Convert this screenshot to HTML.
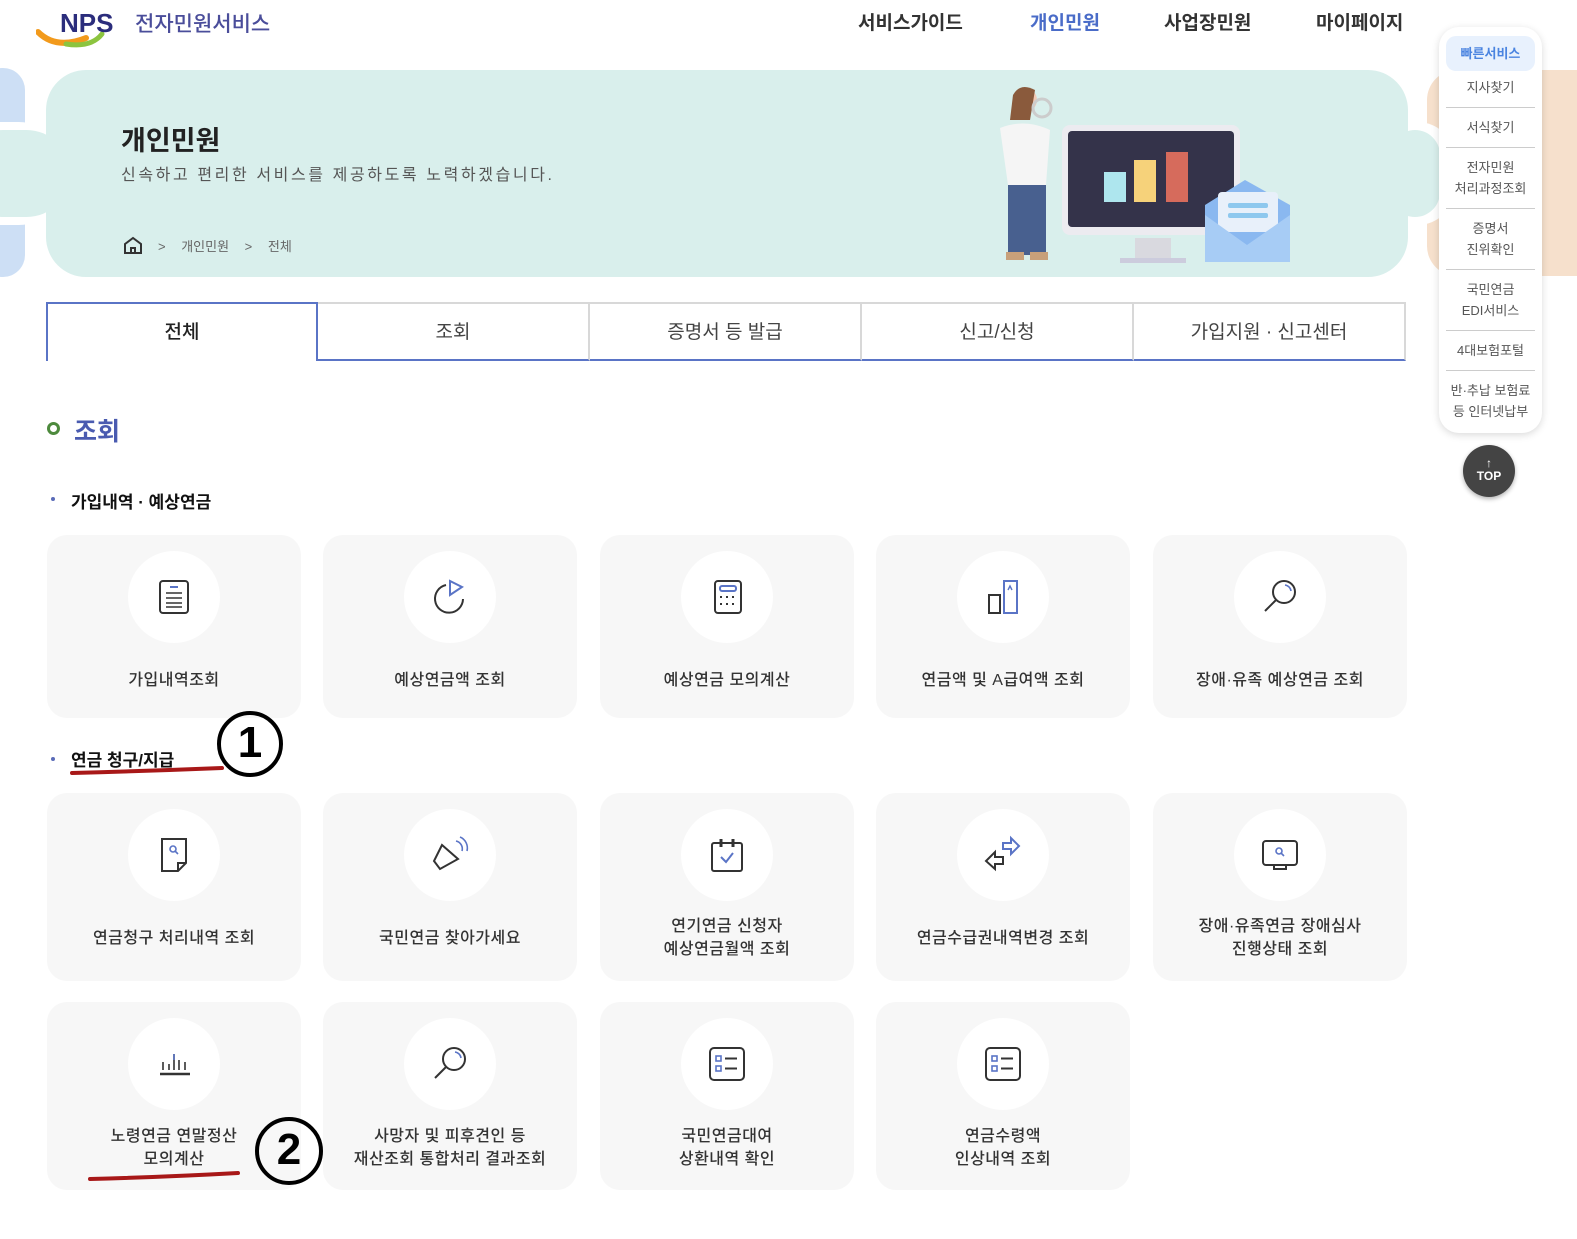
<!DOCTYPE html>
<html><head><meta charset="utf-8">
<style>
*{margin:0;padding:0;box-sizing:border-box}
body{width:1577px;height:1239px;position:relative;background:#fff;overflow:hidden;font-family:"Liberation Sans","Noto Sans CJK KR",sans-serif;color:#222}
.a{position:absolute}
.nav{top:8px;font-size:19px;font-weight:700;color:#333}
.tab{position:absolute;top:302px;height:59px;width:272px;text-align:center;line-height:58px;font-size:19px;color:#444;border-top:2px solid #d8d8d8;border-right:2px solid #d8d8d8;border-bottom:2px solid #5a74c6}
.card{position:absolute;width:254px;background:#f7f7f7;border-radius:20px}
.circ{position:absolute;left:81px;top:16px;width:92px;height:92px;border-radius:50%;background:#fff}
.circ svg{position:absolute;left:26px;top:26px}
.lbl{position:absolute;left:0;width:254px;text-align:center;font-size:16px;font-weight:500;color:#333;line-height:23px;letter-spacing:0.5px}
.qs{font-size:13px;color:#555;text-align:center;line-height:21px}
.qs div{border-bottom:1px solid #ccc;margin:0 7px;padding:9px 0 9px}
</style></head><body>
<!-- logo -->
<svg class="a" style="left:36px;top:8px" width="100" height="42" viewBox="0 0 100 42">
<path d="M2 24 Q20 42 50 30" stroke="#f29a1c" stroke-width="6" fill="none" stroke-linecap="round"/>
<path d="M30 36 Q55 40 66 26" stroke="#8cc43f" stroke-width="5" fill="none" stroke-linecap="round"/>
<text x="24" y="24" font-family="Liberation Sans" font-weight="700" font-size="26" fill="#2b2d7c">NPS</text>
</svg>
<div class="a" style="left:135px;top:8px;font-size:21px;color:#4a4d9a;font-weight:500">전자민원서비스</div>
<div class="a nav" style="left:858px">서비스가이드</div>
<div class="a nav" style="left:1030px;color:#4a6cc8">개인민원</div>
<div class="a nav" style="left:1164px">사업장민원</div>
<div class="a nav" style="left:1316px">마이페이지</div>

<!-- banner -->
<div class="a" style="left:-20px;top:68px;width:45px;height:209px;border-radius:22px;background:#cddff5"></div>
<div class="a" style="left:1427px;top:70px;width:200px;height:206px;border-radius:30px;background:#f6e0cc"></div>
<div class="a" style="left:-50px;top:122px;width:120px;height:103px;border-radius:52px;background:#fff"></div>
<div class="a" style="left:1380px;top:122px;width:75px;height:103px;border-radius:52px;background:#fff"></div>
<div class="a" style="left:-40px;top:130px;width:110px;height:87px;border-radius:44px;background:#d9efec"></div>
<div class="a" style="left:1390px;top:130px;width:50px;height:87px;border-radius:44px;background:#d9efec"></div>
<div class="a" style="left:46px;top:70px;width:1362px;height:207px;border-radius:40px;background:#d9efec"></div>
<div class="a" style="left:121px;top:119px;font-size:27px;font-weight:700;color:#222">개인민원</div>
<div class="a" style="left:121px;top:161px;font-size:16px;color:#555;letter-spacing:2.6px">신속하고 편리한 서비스를 제공하도록 노력하겠습니다.</div>
<svg class="a" style="left:123px;top:236px" width="20" height="18" viewBox="0 0 20 18"><path d="M2 8 L10 2 L18 8 V17 H2 Z M8 17 V12 H12 V17" fill="none" stroke="#333" stroke-width="2"/></svg>
<div class="a" style="left:158px;top:236px;font-size:13px;color:#666;word-spacing:12px">&gt; 개인민원 &gt; 전체</div>
<!-- illustration -->
<svg class="a" style="left:980px;top:80px" width="320" height="190" viewBox="0 0 320 190">
<rect x="82" y="45" width="178" height="110" rx="8" fill="#ecebf0"/>
<rect x="88" y="51" width="166" height="96" rx="4" fill="#34334a"/>
<rect x="124" y="92" width="22" height="30" fill="#aee6ee"/>
<rect x="154" y="80" width="22" height="42" fill="#f6d27a"/>
<rect x="186" y="72" width="22" height="50" fill="#d66b5c"/>
<rect x="155" y="158" width="36" height="20" fill="#d9d9df"/>
<rect x="140" y="178" width="66" height="5" fill="#ccd"/>
<path d="M225 125 L265 100 L310 125 V182 H225 Z" fill="#8ab8f0"/>
<rect x="238" y="112" width="60" height="40" rx="4" fill="#e8f0fa"/>
<rect x="248" y="123" width="40" height="5" rx="2" fill="#8ec8ee"/>
<rect x="248" y="133" width="40" height="5" rx="2" fill="#8ec8ee"/>
<path d="M225 135 L267 165 L310 135 V182 H225 Z" fill="#a7ccf5"/>
<circle cx="45" cy="20" r="12" fill="#f2c9b4"/><path d="M33 15 Q40 2 55 10 L50 40 L30 40 Z" fill="#8a5a3c"/>
<path d="M20 48 Q45 38 70 50 L66 105 L28 105 Z" fill="#f5f5f5"/>
<rect x="28" y="105" width="38" height="70" fill="#48608f"/>
<circle cx="62" cy="28" r="9" fill="none" stroke="#ccc" stroke-width="3"/>
<rect x="26" y="172" width="18" height="8" fill="#c8a07a"/><rect x="50" y="172" width="18" height="8" fill="#c8a07a"/>
</svg>

<!-- tabs -->
<div class="tab" style="left:46px;border:2px solid #5a74c6;border-bottom:none;color:#222;font-weight:500">전체</div>
<div class="tab" style="left:318px;border-left:none">조회</div>
<div class="tab" style="left:590px">증명서 등 발급</div>
<div class="tab" style="left:862px">신고/신청</div>
<div class="tab" style="left:1134px">가입지원 · 신고센터</div>

<div class="a" style="left:47px;top:422px;width:13px;height:13px;border:3px solid #4d8a3d;border-radius:50%"></div>
<div class="a" style="left:74px;top:412px;font-size:25px;font-weight:700;color:#4a5bb0">조회</div>
<div class="a" style="left:51px;top:497px;width:4px;height:4px;border-radius:50%;background:#5a6bb8"></div>
<div class="a" style="left:71px;top:488px;font-size:17px;font-weight:700;color:#111">가입내역 · 예상연금</div>

<!-- row1 -->
<div class="card" style="left:47px;top:535px;height:183px"><div class="circ"><svg width="40" height="40" viewBox="0 0 40 40"><rect x="6" y="4" width="28" height="32" rx="3" fill="none" stroke="#333" stroke-width="2"/><path d="M16 10h8" stroke="#5a74c6" stroke-width="2"/><path d="M12 16h16M12 21h16M12 26h16M12 30h16" stroke="#333" stroke-width="1.6"/></svg></div><div class="lbl" style="top:134px">가입내역조회</div></div>
<div class="card" style="left:323px;top:535px;height:183px"><div class="circ"><svg width="40" height="40" viewBox="0 0 40 40"><path d="M16 8 A14 14 0 1 0 33 22" fill="none" stroke="#333" stroke-width="2"/><path d="M20 4 V18 L32 10 Z" fill="none" stroke="#5a74c6" stroke-width="2"/></svg></div><div class="lbl" style="top:134px">예상연금액 조회</div></div>
<div class="card" style="left:600px;top:535px;height:183px"><div class="circ"><svg width="40" height="40" viewBox="0 0 40 40"><rect x="8" y="4" width="26" height="32" rx="3" fill="none" stroke="#333" stroke-width="2"/><rect x="13" y="9" width="16" height="5" rx="2" fill="none" stroke="#5a74c6" stroke-width="2"/><path d="M13 20h2M19 20h2M25 20h2M13 27h2M19 27h2M25 27h2" stroke="#333" stroke-width="2"/></svg></div><div class="lbl" style="top:134px">예상연금 모의계산</div></div>
<div class="card" style="left:876px;top:535px;height:183px"><div class="circ"><svg width="40" height="40" viewBox="0 0 40 40"><rect x="6" y="18" width="11" height="18" fill="none" stroke="#333" stroke-width="2"/><rect x="21" y="4" width="13" height="32" fill="none" stroke="#5a74c6" stroke-width="2"/><path d="M25 13l2-4 2 4" fill="none" stroke="#5a74c6" stroke-width="1.4"/></svg></div><div class="lbl" style="top:134px">연금액 및 A급여액 조회</div></div>
<div class="card" style="left:1153px;top:535px;height:183px"><div class="circ"><svg width="40" height="40" viewBox="0 0 40 40"><circle cx="24" cy="15" r="11" fill="none" stroke="#333" stroke-width="2"/><path d="M16 23 L5 34" stroke="#333" stroke-width="2"/><path d="M25 8 A7 7 0 0 1 31 14" fill="none" stroke="#5a74c6" stroke-width="1.6"/></svg></div><div class="lbl" style="top:134px">장애·유족 예상연금 조회</div></div>

<div class="a" style="left:51px;top:757px;width:4px;height:4px;border-radius:50%;background:#5a6bb8"></div>
<div class="a" style="left:71px;top:746px;font-size:17px;font-weight:700;color:#111">연금 청구/지급</div>
<svg class="a" style="left:68px;top:764px" width="160" height="14"><path d="M4 9 Q80 7 154 4" stroke="#a81818" stroke-width="4" fill="none" stroke-linecap="round"/></svg>
<div class="a" style="left:217px;top:711px;width:66px;height:66px;border:4px solid #000;border-radius:50%;text-align:center;font-size:44px;font-weight:700;line-height:56px;color:#000">1</div>

<!-- row2 -->
<div class="card" style="left:47px;top:793px;height:188px"><div class="circ"><svg width="40" height="40" viewBox="0 0 40 40"><path d="M8 4h24v24l-8 8H8z M24 36v-8h8" fill="none" stroke="#333" stroke-width="2"/><circle cx="19" cy="14" r="3" fill="none" stroke="#5a74c6" stroke-width="1.6"/><path d="M21 16l3 3" stroke="#5a74c6" stroke-width="1.6"/></svg></div><div class="lbl" style="top:134px">연금청구 처리내역 조회</div></div>
<div class="card" style="left:323px;top:793px;height:188px"><div class="circ"><svg width="40" height="40" viewBox="0 0 40 40"><path d="M12 10 L4 26 L10 34 L28 24 Z" fill="none" stroke="#333" stroke-width="2"/><path d="M26 6 A8 8 0 0 1 32 16 M30 2 A12 12 0 0 1 37 16" fill="none" stroke="#5a74c6" stroke-width="1.6"/></svg></div><div class="lbl" style="top:134px">국민연금 찾아가세요</div></div>
<div class="card" style="left:600px;top:793px;height:188px"><div class="circ"><svg width="40" height="40" viewBox="0 0 40 40"><rect x="5" y="8" width="30" height="28" rx="2" fill="none" stroke="#333" stroke-width="2"/><path d="M14 4v8M26 4v8" stroke="#333" stroke-width="3"/><path d="M14 22l5 5 7-9" fill="none" stroke="#5a74c6" stroke-width="2"/></svg></div><div class="lbl" style="top:122px">연기연금 신청자<br>예상연금월액 조회</div></div>
<div class="card" style="left:876px;top:793px;height:188px"><div class="circ"><svg width="40" height="40" viewBox="0 0 40 40"><path d="M20 8h8v-5l8 8-8 8v-5h-8z" fill="none" stroke="#5a74c6" stroke-width="2"/><path d="M20 22h-8v-5l-9 9 9 8v-5h8z" fill="none" stroke="#333" stroke-width="2"/></svg></div><div class="lbl" style="top:134px">연금수급권내역변경 조회</div></div>
<div class="card" style="left:1153px;top:793px;height:188px"><div class="circ"><svg width="40" height="40" viewBox="0 0 40 40"><rect x="3" y="6" width="34" height="24" rx="3" fill="none" stroke="#333" stroke-width="2"/><path d="M14 30v4h12v-4" fill="none" stroke="#333" stroke-width="2"/><circle cx="19" cy="16" r="3" fill="none" stroke="#5a74c6" stroke-width="1.6"/><path d="M21 18l3 3" stroke="#5a74c6" stroke-width="1.6"/></svg></div><div class="lbl" style="top:122px">장애·유족연금 장애심사<br>진행상태 조회</div></div>

<!-- row3 -->
<div class="card" style="left:47px;top:1002px;height:188px"><div class="circ"><svg width="40" height="40" viewBox="0 0 40 40"><path d="M6 30h30" stroke="#333" stroke-width="2.5"/><path d="M9 26v-8M15 26v-6M20 26V10M25 26v-10M31 26v-8" stroke="#333" stroke-width="1.6"/><path d="M20 10v6" stroke="#5a74c6" stroke-width="1.6"/></svg></div><div class="lbl" style="top:123px">노령연금 연말정산<br>모의계산</div></div>
<div class="card" style="left:323px;top:1002px;height:188px"><div class="circ"><svg width="40" height="40" viewBox="0 0 40 40"><circle cx="24" cy="15" r="11" fill="none" stroke="#333" stroke-width="2"/><path d="M16 23 L5 34" stroke="#333" stroke-width="2"/><path d="M25 8 A7 7 0 0 1 31 14" fill="none" stroke="#5a74c6" stroke-width="1.6"/></svg></div><div class="lbl" style="top:123px">사망자 및 피후견인 등<br>재산조회 통합처리 결과조회</div></div>
<div class="card" style="left:600px;top:1002px;height:188px"><div class="circ"><svg width="40" height="40" viewBox="0 0 40 40"><rect x="3" y="4" width="34" height="32" rx="4" fill="none" stroke="#333" stroke-width="2"/><rect x="9" y="12" width="5" height="5" fill="none" stroke="#5a74c6" stroke-width="1.6"/><rect x="9" y="22" width="5" height="5" fill="none" stroke="#5a74c6" stroke-width="1.6"/><path d="M18 14.5h12M18 24.5h12" stroke="#333" stroke-width="2"/></svg></div><div class="lbl" style="top:123px">국민연금대여<br>상환내역 확인</div></div>
<div class="card" style="left:876px;top:1002px;height:188px"><div class="circ"><svg width="40" height="40" viewBox="0 0 40 40"><rect x="3" y="4" width="34" height="32" rx="4" fill="none" stroke="#333" stroke-width="2"/><rect x="9" y="12" width="5" height="5" fill="none" stroke="#5a74c6" stroke-width="1.6"/><rect x="9" y="22" width="5" height="5" fill="none" stroke="#5a74c6" stroke-width="1.6"/><path d="M18 14.5h12M18 24.5h12" stroke="#333" stroke-width="2"/></svg></div><div class="lbl" style="top:123px">연금수령액<br>인상내역 조회</div></div>

<svg class="a" style="left:86px;top:1166px" width="160" height="18"><path d="M4 13 Q80 11 152 7" stroke="#a81818" stroke-width="4" fill="none" stroke-linecap="round"/></svg>
<div class="a" style="left:255px;top:1117px;width:68px;height:68px;border:4px solid #000;border-radius:50%;text-align:center;font-size:44px;font-weight:700;line-height:58px;color:#000">2</div>

<!-- quick panel -->
<div class="a qs" style="left:1439px;top:27px;width:103px;height:406px;background:#fff;border-radius:20px;box-shadow:0 2px 8px rgba(0,0,0,0.15)">
<div style="margin:9px 7px 0;background:#e8f1fd;border:none;border-radius:10px;color:#4a84e0;font-weight:700;padding:7px 0">빠른서비스</div>
<div style="padding-top:6px">지사찾기</div>
<div>서식찾기</div>
<div>전자민원<br>처리과정조회</div>
<div>증명서<br>진위확인</div>
<div>국민연금<br>EDI서비스</div>
<div>4대보험포털</div>
<div style="border:none">반·추납 보험료<br>등 인터넷납부</div>
</div>
<div class="a" style="left:1463px;top:445px;width:52px;height:52px;border-radius:50%;background:#444;color:#fff;text-align:center;font-size:12px;font-weight:700;line-height:13px;padding-top:12px;box-shadow:0 2px 5px rgba(0,0,0,0.3)">↑<br>TOP</div>
</body></html>
